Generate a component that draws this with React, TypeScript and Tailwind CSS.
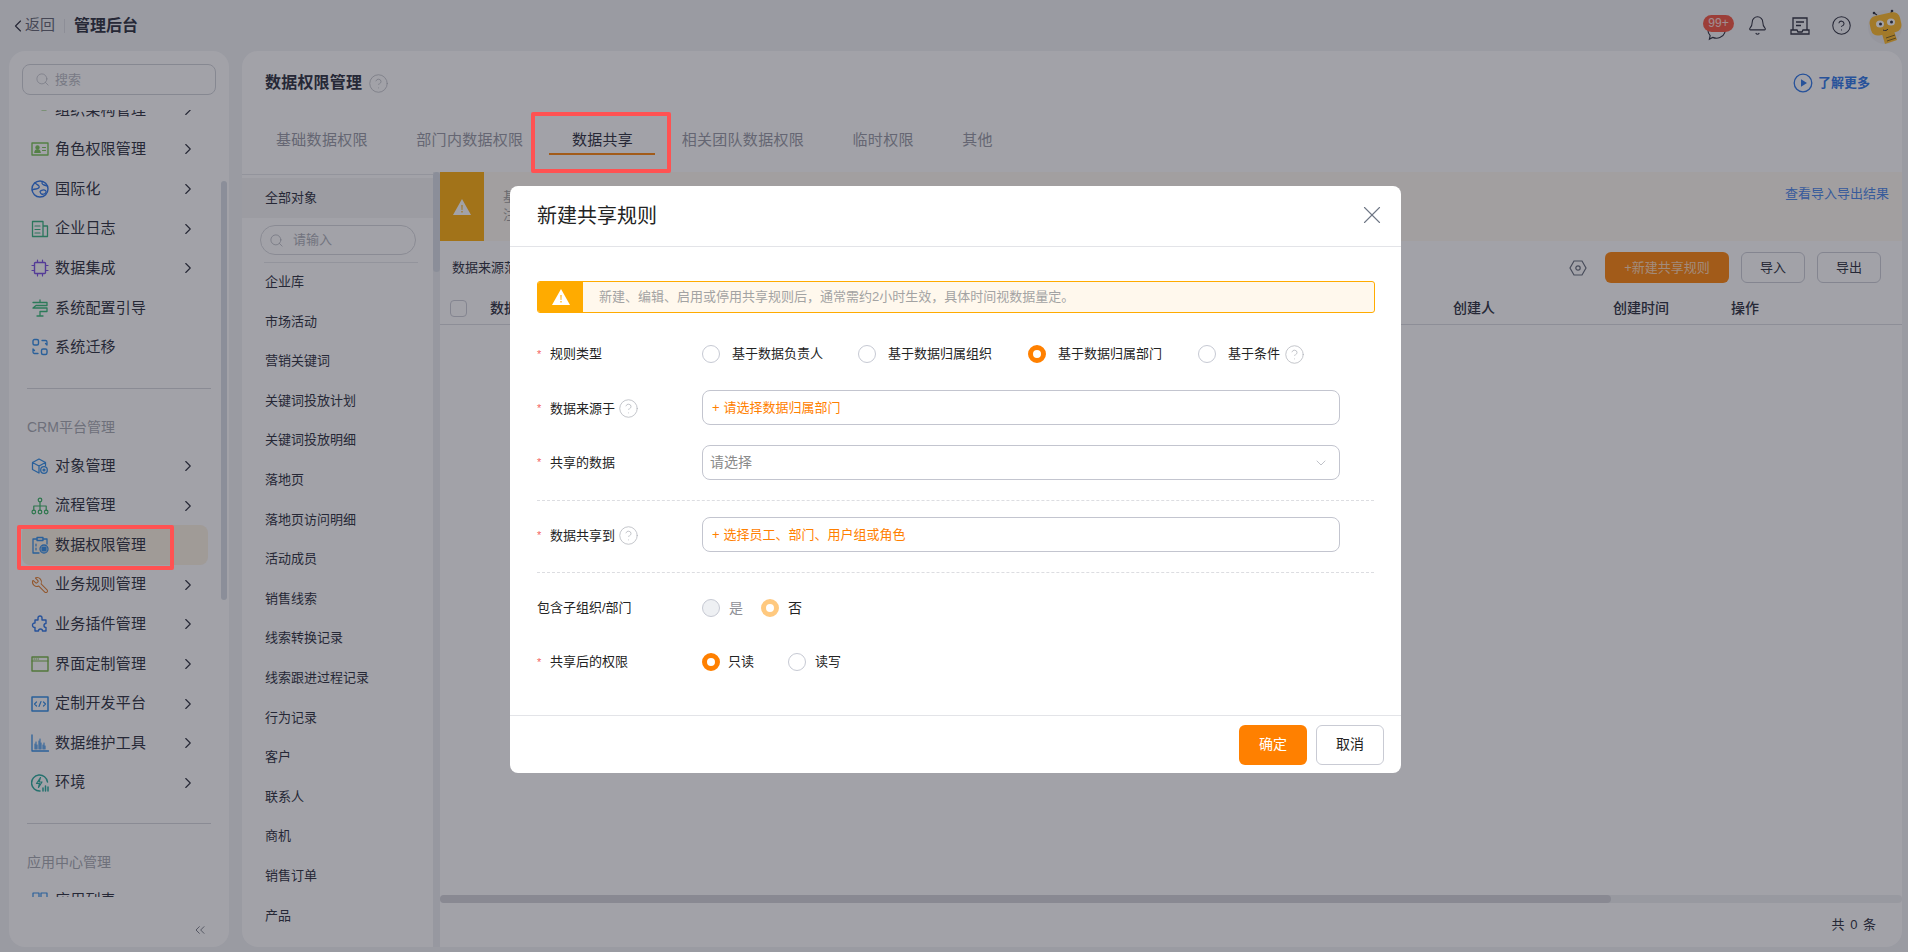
import { Bell, ChevronDown, ChevronLeft, ChevronRight, ChevronsLeft, CircleHelp, Search, Wrench, X } from "lucide-react";
import type { ReactNode } from "react";

const Svg = ({ color, children }: { color: string; children: ReactNode }) => (
  <svg width="18" height="18" viewBox="0 0 18 18" fill="none" stroke={color} strokeWidth="1.2" strokeLinecap="round" strokeLinejoin="round">
    {children}
  </svg>
);

const icons: Record<string, ReactNode> = {
  org: (
    <Svg color="#74c24f">
      <path d="M2 1v7h6M12 8h4v-3" />
      <rect x="11" y="6" width="4" height="3" fill="#74c24f" />
    </Svg>
  ),
  role: (
    <Svg color="#74c24f">
      <rect x="1" y="3" width="16" height="12" strokeWidth="1.4" />
      <circle cx="6.5" cy="7.5" r="1.6" fill="#74c24f" />
      <path d="M3.8 12.5c.3-2 1.3-2.6 2.7-2.6s2.4.6 2.7 2.6zM11.5 7.5h3M11.5 10.5h3" fill="#74c24f" />
    </Svg>
  ),
  globe: (
    <Svg color="#2470e6">
      <circle cx="9" cy="9" r="8" strokeWidth="1.4" />
      <path d="M4 2.500c1 2 3 2 4 3.500s-1 3-3 3-4 1-4 1M11.500 1.500c-1 1.500-.5 3 1.500 3.500s3 1 3 1M9 11.500c1-1.500 4-2 5.500-1s0 3-1.500 3.500-3.500.5-4-2.500z" strokeWidth="1.3" />
    </Svg>
  ),
  log: (
    <Svg color="#2eb07a">
      <path d="M12 16.500H1.500V1.500h10.500v15zM12 6h4.500v10.500H12" strokeWidth="1.3" />
      <path d="M4 6h5M4 9.500h5M4 13h5" />
    </Svg>
  ),
  chip: (
    <Svg color="#7448e0">
      <rect x="3.500" y="3.500" width="11" height="11" rx="1" strokeWidth="1.4" />
      <path d="M6.500 1v2.500M11.500 1v2.500M6.500 14.500V17M11.500 14.500V17M1 6.500h2.500M1 11.500h2.500M14.500 6.500H17M14.500 11.500H17" />
    </Svg>
  ),
  guide: (
    <Svg color="#2eb872">
      <path d="M9 1v2M2 3.500h14v3H5M5 6.500 2 9h14v3.500H9M9 12.500V17M6 17h6" strokeWidth="1.3" />
    </Svg>
  ),
  migrate: (
    <Svg color="#2a8ae6">
      <rect x="2" y="1.500" width="5.500" height="5.500" rx="1.500" strokeWidth="1.4" />
      <rect x="10.500" y="11" width="5.500" height="5.500" rx="1.500" strokeWidth="1.4" />
      <path d="M11 2.500h3.500a1.500 1.500 0 0 1 1.500 1.500v3l-1.500-1.500M7 15.500H3.500A1.500 1.500 0 0 1 2 14v-3l1.500 1.500" strokeWidth="1.3" />
    </Svg>
  ),
  object: (
    <Svg color="#2a8ae6">
      <path d="M8 16 1.500 12.500v-7L8 2l6.500 3.500v3M1.500 5.500 8 9l6.500-3.500M8 9v7" strokeWidth="1.3" />
      <circle cx="13" cy="13" r="3.300" strokeWidth="1.300" />
      <circle cx="13" cy="13" r="1" fill="#2a8ae6" />
    </Svg>
  ),
  flow: (
    <Svg color="#2eb05c">
      <circle cx="9" cy="3" r="1.800" />
      <circle cx="2.800" cy="15" r="1.800" />
      <circle cx="9" cy="15" r="1.800" />
      <circle cx="15.200" cy="15" r="1.800" />
      <path d="M9 5v8M2.800 13V9h12.400v4" />
    </Svg>
  ),
  perm: (
    <Svg color="#2a8ae6">
      <path d="M6 3H2v14h6M12 3h4v5" strokeWidth="1.3" />
      <rect x="6" y="1.500" width="6" height="3" strokeWidth="1.3" />
      <path d="M5 8v2M5 12v2" />
      <circle cx="13" cy="13" r="4" strokeWidth="1.3" />
      <rect x="11" y="11" width="4" height="4" fill="#2a8ae6" />
    </Svg>
  ),
  plugin: (
    <Svg color="#2470e6">
      <path d="M7 3a2 2 0 0 1 4 0v2h4v3.500a2 2 0 0 0 0 4V16h-3.500a2 2 0 0 0-4 0H4v-3.500a2.200 2.200 0 0 1-2.500-2.200A2.200 2.200 0 0 1 4 8V5h3z" strokeWidth="1.400" />
    </Svg>
  ),
  window: (
    <Svg color="#72b43e">
      <rect x="1" y="2" width="16" height="14" strokeWidth="1.4" />
      <path d="M1 6h16M3 4h.5M5 4h.5M7 4h.5" />
    </Svg>
  ),
  code: (
    <Svg color="#2a8ae6">
      <rect x="1" y="2" width="16" height="14" strokeWidth="1.5" />
      <path d="M5.500 7 3.500 9l2 2M12.500 7l2 2-2 2M10 6.500 8 11.500" />
    </Svg>
  ),
  chart: (
    <Svg color="#2a8ae6">
      <path d="M1 1v16h16.500" strokeWidth="1.3" />
      <path d="M5 8v7M9 5v10M13 9v6M4 15V10M6 15v-4M8 15V7M10 15V9M12 15v-4M14 15v-3" strokeWidth="1" />
    </Svg>
  ),
  env: (
    <Svg color="#20a898">
      <path d="M16.500 8A8 8 0 1 0 9 17" strokeWidth="1.500" />
      <path d="M9.500 3.500 5.500 9.500h3l-1 4 3.500-5.500H8z" />
      <path d="M12 17v-3M14.500 17v-5M17 17v-4" strokeWidth="1.500" />
    </Svg>
  ),
  apps: (
    <Svg color="#2a8ae6">
      <rect x="2" y="2" width="6" height="6" />
      <rect x="10" y="2" width="6" height="6" />
      <rect x="2" y="10" width="6" height="6" />
      <rect x="10" y="10" width="6" height="6" />
    </Svg>
  ),
};

const MenuRow = ({ icon, label, active, noArrow }: { icon: ReactNode; label: string; active?: boolean; noArrow?: boolean }) => (
  <div className={`flex h-[39.6px] items-center ml-[13px] mr-[21px] pl-[9px] pr-[11px] rounded-lg text-[15px] tracking-[0.2px] text-[#232634] ${active ? "bg-[#fbf2e1]" : ""}`}>
    <span className="w-[18px] h-[18px] mr-[6px] shrink-0">{icon}</span>
    <span className="flex-1 whitespace-nowrap">{label}</span>
    {!active && !noArrow && <ChevronRight size={18} strokeWidth={1.5} className="text-[#232634]" />}
  </div>
);

const objectItems = [
  "企业库", "市场活动", "营销关键词", "关键词投放计划", "关键词投放明细", "落地页", "落地页访问明细", "活动成员",
  "销售线索", "线索转换记录", "线索跟进过程记录", "行为记录", "客户", "联系人", "商机", "销售订单", "产品",
];

const Sidebar = () => (
  <aside className="relative w-[220px] shrink-0 rounded-t-2xl rounded-b-2xl bg-white flex flex-col overflow-hidden">
    <div className="mx-[13px] mt-[13px] h-[31px] shrink-0 rounded-lg border border-[#cdd0d6] flex items-center pl-3 text-[13px] text-[#b5b8c0]">
      <Search size={15} strokeWidth={1.2} className="mr-[5px]" />
      搜索
    </div>
    <div className="mt-[15px] h-[787px] overflow-hidden shrink-0">
      <div className="-mt-[20px]">
        <MenuRow icon={icons.org} label="组织架构管理" />
        <MenuRow icon={icons.role} label="角色权限管理" />
        <MenuRow icon={icons.globe} label="国际化" />
        <MenuRow icon={icons.log} label="企业日志" />
        <MenuRow icon={icons.chip} label="数据集成" />
        <MenuRow icon={icons.guide} label="系统配置引导" noArrow />
        <MenuRow icon={icons.migrate} label="系统迁移" noArrow />
        <div className="mx-[18px] mt-[21px] border-t border-[#d4d6db]" />
        <div className="ml-[18px] mt-[28px] mb-[9px] text-[14px] leading-5 text-[#a3a6ae]">CRM平台管理</div>
        <MenuRow icon={icons.object} label="对象管理" />
        <MenuRow icon={icons.flow} label="流程管理" />
        <MenuRow icon={icons.perm} label="数据权限管理" active />
        <MenuRow icon={<Wrench size={18} strokeWidth={1.4} color="#e27a26" className="-scale-x-100" />} label="业务规则管理" />
        <MenuRow icon={icons.plugin} label="业务插件管理" />
        <MenuRow icon={icons.window} label="界面定制管理" />
        <MenuRow icon={icons.code} label="定制开发平台" />
        <MenuRow icon={icons.chart} label="数据维护工具" />
        <MenuRow icon={icons.env} label="环境" />
        <div className="mx-[18px] mt-[20px] border-t border-[#d4d6db]" />
        <div className="ml-[18px] mt-[28px] mb-[9px] text-[14px] leading-5 text-[#a3a6ae]">应用中心管理</div>
        <MenuRow icon={icons.apps} label="应用列表" noArrow />
      </div>
    </div>
    <div className="flex-1 flex items-center justify-end pr-[21px] pt-[16px]">
      <ChevronsLeft size={16} strokeWidth={1.2} className="text-[#555a68]" />
    </div>
    <div className="absolute right-[2px] top-[130px] h-[419px] w-[6px] rounded-full bg-[#d6dce4]" />
  </aside>
);

const ObjectList = () => (
  <div className="w-[191px] shrink-0 flex flex-col overflow-hidden">
    <div className="mt-[2px] border-t border-[#e4e6ea]" />
    <div className="mt-[3px] h-[40px] shrink-0 bg-[#f4f4f5] flex items-center pl-[23px] text-[13px] text-[#232634]">全部对象</div>
    <div className="ml-[18px] mt-[7px] w-[156px] h-[30px] shrink-0 rounded-full border border-[#d4d6db] flex items-center pl-[8px] text-[13px] text-[#a9acb5]">
      <Search size={15} strokeWidth={1.2} className="mr-[9px]" />
      请输入
    </div>
    <div className="ml-[22px] mt-[7px] w-[154px] border-t border-[#e4e6ea]" />
    <div className="pl-[23px] -mt-[1px]">
      {objectItems.map((item) => (
        <div key={item} className="h-[39.6px] flex items-center text-[13px] text-[#232634]">
          {item}
        </div>
      ))}
    </div>
  </div>
);

const DataPanel = () => (
  <div className="flex-1 min-w-0 flex flex-col">
    <div className="h-[69px] shrink-0 flex bg-[#fffaf0]">
      <div className="w-[44px] bg-[#ffab00] flex items-center justify-center">
        <AlertTriangle />
      </div>
      <div className="flex-1 pl-[19px] pt-[16px] text-[13px] leading-[18px] text-[#9a9a9a]">
        <div>基于数据归属部门的共享规则</div>
        <div>注意事项</div>
      </div>
      <div className="pr-[13px] pt-[12px] text-[13px] leading-5 text-[#3f80e8]">查看导入导出结果</div>
    </div>
    <div className="mt-[11px] h-[31px] shrink-0 flex items-center pl-[12px] pr-[21px] text-[13px]">
      <span className="text-[#232634]">数据来源范围</span>
      <svg className="ml-auto mr-[18px]" width="18" height="18" viewBox="0 0 18 18" fill="none" stroke="#5f6675" strokeWidth="1.2">
        <path d="M5 2h8l4 7-4 7H5L1 9z" />
        <circle cx="9" cy="9" r="2.200" />
      </svg>
      <div className="w-[124px] h-[31px] rounded-md bg-[#ff8000] text-white/70 flex items-center justify-center">+新建共享规则</div>
      <div className="ml-[12px] w-[64px] h-[31px] rounded-md border border-[#c9cbd4] text-[#232634] flex items-center justify-center">导入</div>
      <div className="ml-[12px] w-[64px] h-[31px] rounded-md border border-[#c9cbd4] text-[#232634] flex items-center justify-center">导出</div>
    </div>
    <div className="mt-[11px] h-[31px] shrink-0 border-b border-[#d9dbe0] flex items-center pl-[10px] pb-[2px] text-[14px] font-medium text-[#232634] relative">
      <span className="w-[17px] h-[17px] mr-[23px] rounded border border-[#c9cbd4]" />
      <span>数据来源</span>
      <span className="absolute left-[1013px]">创建人</span>
      <span className="absolute left-[1173px]">创建时间</span>
      <span className="absolute left-[1291px]">操作</span>
    </div>
    <div className="flex-1" />
    <div className="h-[8px] shrink-0 bg-[#eeeff1] rounded-full">
      <div className="h-full w-[1171px] rounded-full bg-[#d2d3d8]" />
    </div>
    <div className="h-[44px] shrink-0 flex items-center justify-end pr-[25px] text-[13px] tracking-[1px] text-[#232634]">共 0 条</div>
  </div>
);

const AlertTriangle = () => (
  <svg width="18" height="16" viewBox="0 0 18 16">
    <path d="M9 0 18 16H0z" fill="#fff" />
    <path d="M8.400 6h1.200l-.2 5h-.8zM8.400 12h1.200v1.400H8.400z" fill="#ffab00" />
  </svg>
);

const Help = ({ className }: { className?: string }) => <CircleHelp size={21} strokeWidth={0.9} className={`text-[#b4b6bd] ${className ?? ""}`} />;

const Radio = ({ checked, tone }: { checked?: boolean; tone?: "muted" | "disabled" }) => {
  let cls = "border border-[#c6c9d3] bg-white";
  if (checked) cls = tone === "muted" ? "border-[5px] border-[#ffc97f] bg-white" : "border-[5px] border-[#ff8000] bg-white";
  else if (tone === "disabled") cls = "border border-[#c6c9d3] bg-[#eef0f3]";
  return <span className={`block w-[18px] h-[18px] rounded-full shrink-0 ${cls}`} />;
};

const Label = ({ text, required, help }: { text: string; required?: boolean; help?: boolean }) => (
  <div className={`w-[165px] shrink-0 flex items-center text-[13px] text-[#232323] ${help ? "pt-[2px]" : ""}`}>
    {required && <span className="w-[13px] text-[#f4645f] text-[11px]">*</span>}
    <span>{text}</span>
    {help && <Help className="ml-[3px]" />}
  </div>
);

const PickerInput = ({ text }: { text: string }) => (
  <div className="w-[638px] h-[35px] rounded-lg border border-[#c3c5cf] flex items-center pl-[9px] text-[13px] text-[#ff8000]">
    <span className="mr-[4px]">+</span>
    {text}
  </div>
);

const Choice = ({ label, checked, gap }: { label: string; checked?: boolean; gap: string }) => (
  <div className={`flex items-center ${gap}`}>
    <Radio checked={checked} />
    <span className="ml-[12px] text-[13px] text-[#232323] whitespace-nowrap">{label}</span>
  </div>
);

const ShareModal = () => (
  <div className="absolute inset-0 bg-[#2b2c3a]/[.44] pl-[510px] pt-[186px]">
    <div className="w-[891px] h-[587px] rounded-lg bg-white flex flex-col">
      <div className="h-[61px] shrink-0 border-b border-[#e3e4e8] flex items-center justify-between pl-[27px] pr-[14px]">
        <span className="text-[20px] text-[#232323]">新建共享规则</span>
        <X size={30} strokeWidth={0.9} className="text-[#6e7685] -mt-[3px]" />
      </div>
      <div className="flex-1 px-[27px] pt-[34px]">
        <div className="w-[838px] h-[32px] rounded-[3px] border border-[#ffab00] bg-[#fff8ed] flex items-center overflow-hidden">
          <div className="w-[45px] h-full bg-[#ffab00] flex items-center justify-center">
            <AlertTriangle />
          </div>
          <span className="ml-[16px] text-[13px] text-[#a3a3a3]">新建、编辑、启用或停用共享规则后，通常需约2小时生效，具体时间视数据量定。</span>
        </div>
        <div className="mt-[31px] h-[20px] flex items-center">
          <Label text="规则类型" required />
          <Choice label="基于数据负责人" gap="w-[156px]" />
          <Choice label="基于数据归属组织" gap="w-[170px]" />
          <Choice label="基于数据归属部门" checked gap="w-[170px]" />
          <Choice label="基于条件" gap="" />
          <Help className="ml-[4px]" />
        </div>
        <div className="mt-[26px] flex items-center">
          <Label text="数据来源于" required help />
          <PickerInput text="请选择数据归属部门" />
        </div>
        <div className="mt-[20px] flex items-center">
          <Label text="共享的数据" required />
          <div className="w-[638px] h-[35px] rounded-lg border border-[#c3c5cf] flex items-center justify-between pl-[7px] pr-[10px] text-[14px] text-[#8a8a8a]">
            请选择
            <ChevronDown size={16} strokeWidth={1} className="text-[#a0a3ad]" />
          </div>
        </div>
        <div className="mt-[20px] border-t border-dashed border-[#dcdde1]" />
        <div className="mt-[16px] flex items-center">
          <Label text="数据共享到" required help />
          <PickerInput text="选择员工、部门、用户组或角色" />
        </div>
        <div className="mt-[20px] border-t border-dashed border-[#dcdde1]" />
        <div className="mt-[25px] h-[20px] flex items-center">
          <Label text="包含子组织/部门" />
          <Radio tone="disabled" />
          <span className="ml-[9px] w-[18px] text-[14px] text-[#8f9097]">是</span>
          <span className="ml-[14px]"><Radio checked tone="muted" /></span>
          <span className="ml-[9px] text-[14px] text-[#232323]">否</span>
        </div>
        <div className="mt-[34px] h-[20px] flex items-center">
          <Label text="共享后的权限" required />
          <Radio checked />
          <span className="ml-[8px] w-[60px] text-[13px] text-[#232323]">只读</span>
          <Radio />
          <span className="ml-[9px] text-[13px] text-[#232323]">读写</span>
        </div>
      </div>
      <div className="h-[58px] shrink-0 border-t border-[#e3e4e8] flex items-center justify-end gap-[9px] pr-[17px]">
        <button className="w-[68px] h-[40px] rounded-md bg-[#ff8000] text-white text-[14px]">确定</button>
        <button className="w-[68px] h-[40px] rounded-md border border-[#c9cbd4] text-[#232323] text-[14px]">取消</button>
      </div>
    </div>
  </div>
);

const Mascot = () => (
  <svg width="34" height="36" viewBox="0 0 34 36">
    <circle cx="17" cy="19" r="17" fill="#e9eaec" />
    <path d="M9 7 6 5M22 7l2-4" stroke="#232634" strokeWidth="1.2" />
    <circle cx="6" cy="5" r="1.300" fill="#232634" />
    <circle cx="24" cy="3" r="1.300" fill="#232634" />
    <rect x="2" y="6" width="31" height="20" rx="7" fill="#ffb81f" transform="rotate(-12 17 16)" />
    <path d="M14 26l12-3 3 9-12 4z" fill="#ffb81f" />
    <path d="M18 30l9-3M19 33l9-3" stroke="#7a5a10" strokeWidth="1" />
    <ellipse cx="12" cy="16" rx="4" ry="3.500" fill="#fff" />
    <ellipse cx="23" cy="14" rx="4" ry="3.500" fill="#fff" />
    <circle cx="12.500" cy="16" r="1.500" fill="#232634" />
    <circle cx="23.500" cy="14" r="1.500" fill="#232634" />
    <path d="M15 22c2 1 4 .5 5-1" stroke="#232634" strokeWidth="1" fill="none" />
  </svg>
);

export default function App() {
  return (
    <div className="relative w-[1908px] h-[952px] overflow-hidden bg-[#f0f2f5] font-['Liberation_Sans','Noto_Sans_CJK_SC',sans-serif]">
      <header className="h-[51px] flex items-center pl-[9px] pr-[6px]">
        <ChevronLeft size={20} strokeWidth={1.4} className="text-[#232634] -ml-[1px]" />
        <span className="ml-[-3px] text-[15px] text-[#5b5e6b]">返回</span>
        <span className="mx-[9px] h-[14px] border-l border-[#d9dbe0]" />
        <span className="text-[16px] font-bold text-[#232634]">管理后台</span>
        <div className="ml-auto flex items-center">
          <div className="relative w-[32px] h-[36px]">
            <svg className="absolute left-[4px] top-[14px]" width="20" height="19" viewBox="0 0 21 20" fill="none" stroke="#232634" strokeWidth="1.200">
              <path d="M1 9a9 8 0 1 1 5 7.200L2.500 18l.8-3.700A8 8 0 0 1 1 9z" />
            </svg>
            <span className="absolute left-0 top-[7px] w-[31px] h-[17px] rounded-full bg-[#f44e38] text-white/80 text-[12px] leading-[17px] text-center">99+</span>
          </div>
          <Bell size={21} strokeWidth={1.2} className="ml-[12px] text-[#232634]" />
          <svg className="ml-[22px]" width="20" height="20" viewBox="0 0 20 20" fill="none" stroke="#232634" strokeWidth="1.300">
            <path d="M3 14V2h14v12M1 14h6l1 2h4l1-2h6v4H1zM6 6h8M6 9.500h5" />
          </svg>
          <CircleHelp size={21} strokeWidth={1.2} className="ml-[21px] text-[#232634]" />
          <div className="ml-[16px]"><Mascot /></div>
        </div>
      </header>

      <main className="h-[896px] flex gap-[13px] pl-[9px] pr-[6px]">
        <Sidebar />
        <section className="flex-1 min-w-0 rounded-2xl bg-white flex flex-col overflow-hidden">
          <div className="h-[60px] shrink-0 flex items-center pl-[23px] pr-[32px] pt-[4px]">
            <span className="text-[16px] tracking-[0.2px] font-bold text-[#232634]">数据权限管理</span>
            <Help className="ml-[6px]" />
            <svg className="ml-auto mr-[5px]" width="20" height="20" viewBox="0 0 20 20" fill="none">
              <circle cx="10" cy="10" r="8.800" stroke="#2470e6" strokeWidth="1.300" />
              <path d="M8 6.200 14 10l-6 3.800z" fill="#2470e6" />
            </svg>
            <span className="text-[13px] font-bold text-[#2470e6]">了解更多</span>
          </div>
          <div className="h-[61px] shrink-0 flex items-center gap-[48.5px] pl-[34px] text-[15px] tracking-[0.3px] text-[#9295a0] pb-[2px]">
            <span>基础数据权限</span>
            <span>部门内数据权限</span>
            <span className="relative text-[#232634]">
              数据共享
              <span className="absolute -left-[23px] -right-[22px] top-[24px] h-[2px] bg-[#ff8000]" />
            </span>
            <span>相关团队数据权限</span>
            <span>临时权限</span>
            <span>其他</span>
          </div>
          <div className="flex-1 min-h-0 flex">
            <ObjectList />
            <div className="w-[7px] shrink-0 bg-[#eceef0]">
              <div className="w-full h-[100px] rounded-full bg-[#d6dce4]" />
            </div>
            <DataPanel />
          </div>
        </section>
      </main>

      <ShareModal />

      {/* red annotation boxes sit over the dimmed page */}
      <div className="absolute left-[17px] top-[525px] w-[157px] h-[45px] rounded-[2px] border-4 border-[#ff5252]" />
      <div className="absolute left-[531px] top-[112px] w-[140px] h-[61px] rounded-[2px] border-4 border-[#ff5252]" />
    </div>
  );
}
